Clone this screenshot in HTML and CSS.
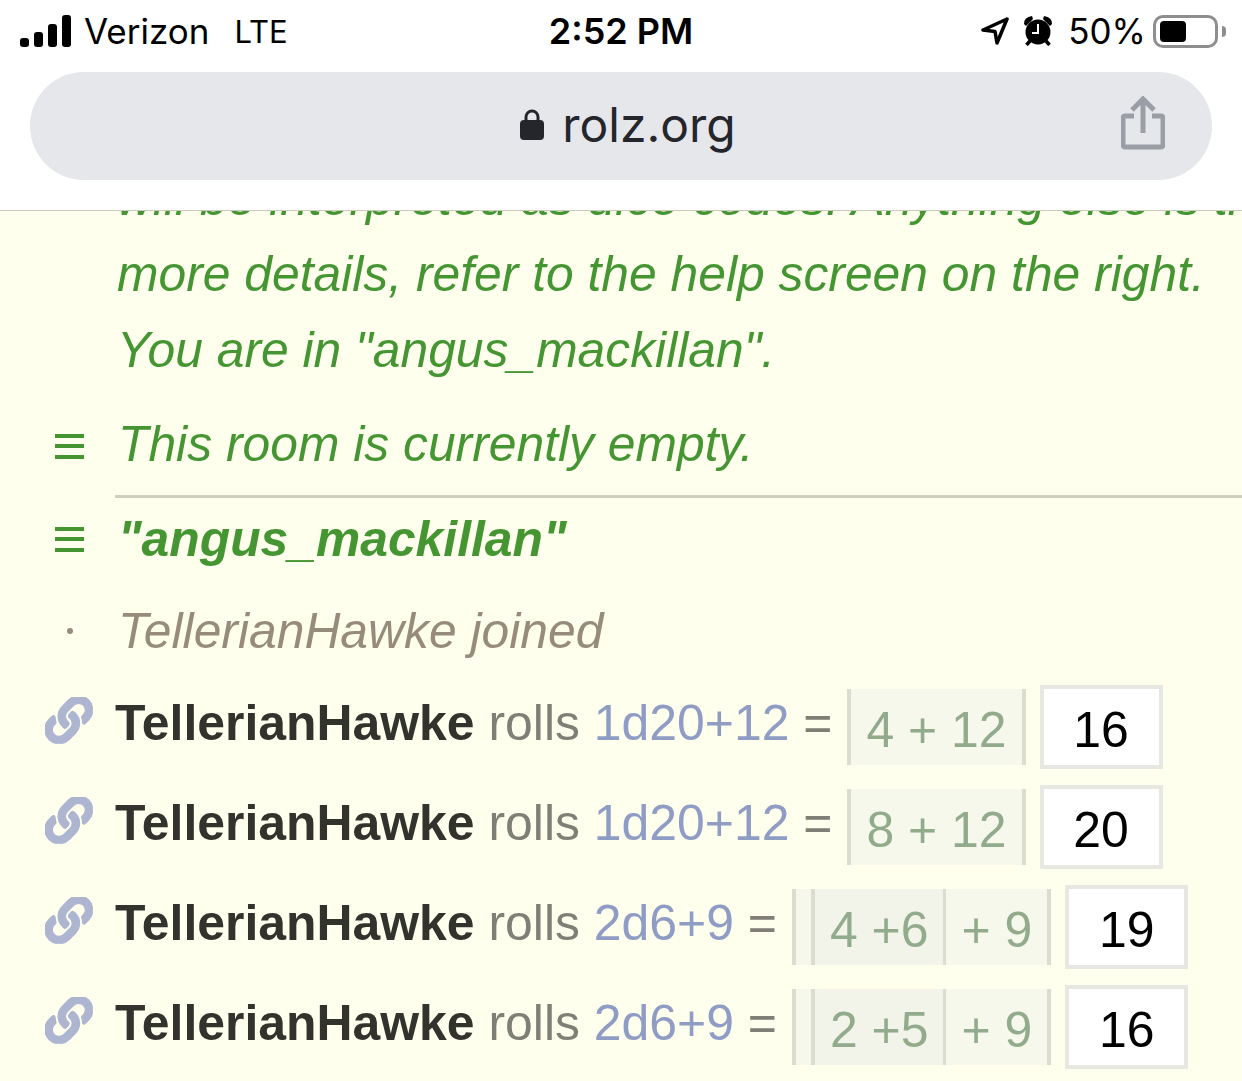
FILE: index.html
```html
<!DOCTYPE html>
<html lang="en">
<head>
    <meta charset="UTF-8">
    <title>rolz.org</title>
    <link rel="stylesheet" href="styles.css">
</head>
<body>
    <div class="page">
        <div class="header">
            <div class="status-bar">
                <div class="status-left">
                    <svg class="signal" width="52" height="32" viewBox="0 0 52 32">
                        <rect x="0" y="23" width="9" height="9" rx="3"/>
                        <rect x="14" y="17" width="9" height="15" rx="3"/>
                        <rect x="28" y="9" width="9" height="23" rx="3"/>
                        <rect x="42" y="0" width="9" height="32" rx="3"/>
                    </svg>
                    <span class="carrier">Verizon</span>
                    <span class="network">LTE</span>
                </div>
                <div class="clock">2:52 PM</div>
                <div class="status-right">
                    <svg class="arrow" width="28" height="28" viewBox="0 0 28 28">
                        <path d="M26 2 L2 13 L14 14.5 L16 26 Z" fill="none" stroke="#000" stroke-width="3.5" stroke-linejoin="round"/>
                    </svg>
                    <svg class="alarm" width="28" height="30" viewBox="0 0 28 30">
                        <circle cx="14" cy="16" r="12.5"/>
                        <path d="M0 8 Q0 1 8 0 L9 3 L2 10 Z M28 8 Q28 1 20 0 L19 3 L26 10 Z"/>
                        <path d="M6 25 L2.5 29 M22 25 L25.5 29" stroke="#000" stroke-width="3.5"/>
                        <path d="M14 8 V17 H8" fill="none" stroke="#fff" stroke-width="2"/>
                    </svg>
                    <span class="percent">50%</span>
                    <div class="battery"><div class="battery-fill"></div></div>
                    <div class="battery-nub"></div>
                </div>
            </div>
            <div class="url-bar">
                <div></div>
                <div class="url">
                    <svg class="lock" width="24" height="31" viewBox="0 0 24 31">
                        <path d="M6 13 V8 a6 6 0 0 1 12 0 V13" fill="none" stroke="#24262b" stroke-width="3"/>
                        <rect x="0" y="11" width="24" height="20" rx="4" fill="#24262b"/>
                    </svg>
                    <span>rolz.org</span>
                </div>
                <svg class="share" width="44" height="54" viewBox="0 0 44 54">
                    <path d="M13 20 H4 a2 2 0 0 0 -2 2 V49 a2 2 0 0 0 2 2 H40 a2 2 0 0 0 2 -2 V22 a2 2 0 0 0 -2 -2 H31" fill="none" stroke="#9b9ea4" stroke-width="5"/>
                    <path d="M22 37 V4 M11 14 L22 3 L33 14" fill="none" stroke="#9b9ea4" stroke-width="5"/>
                </svg>
            </div>
        </div>

        <div class="chat">
            <div class="intro">
                will be interpreted as dice codes. Anything else is treated as chat.<br>
                more details, refer to the help screen on the right.<br>
                You are in "angus_mackillan".
            </div>

            <div class="line room-empty">
                <div class="gutter"><div class="menu-icon"><i></i><i></i><i></i></div></div>
                <div class="notice">This room is currently empty.</div>
            </div>

            <div class="line room-title">
                <div class="gutter"><div class="menu-icon"><i></i><i></i><i></i></div></div>
                <div class="notice title">"angus_mackillan"</div>
            </div>

            <div class="line joined">
                <div class="gutter"><div class="dot"></div></div>
                <div class="join-text">TellerianHawke joined</div>
            </div>

            <div class="line roll">
                <div class="gutter">
                    <svg class="link-icon" viewBox="12 12 488 488"><use href="#chain"/></svg>
                </div>
                <span class="roll-text"><b>TellerianHawke</b> rolls <span class="code">1d20+12</span> =</span>
                <div class="dice">
                    <div class="group">4 + 12</div>
                </div>
                <div class="total">16</div>
            </div>

            <div class="line roll">
                <div class="gutter">
                    <svg class="link-icon" viewBox="12 12 488 488"><use href="#chain"/></svg>
                </div>
                <span class="roll-text"><b>TellerianHawke</b> rolls <span class="code">1d20+12</span> =</span>
                <div class="dice">
                    <div class="group">8 + 12</div>
                </div>
                <div class="total">20</div>
            </div>

            <div class="line roll">
                <div class="gutter">
                    <svg class="link-icon" viewBox="12 12 488 488"><use href="#chain"/></svg>
                </div>
                <span class="roll-text"><b>TellerianHawke</b> rolls <span class="code">2d6+9</span> =</span>
                <div class="dice">
                    <div class="group spacer"></div>
                    <div class="group inner">4 +6</div>
                    <div class="group mod">+ 9</div>
                </div>
                <div class="total">19</div>
            </div>

            <div class="line roll">
                <div class="gutter">
                    <svg class="link-icon" viewBox="12 12 488 488"><use href="#chain"/></svg>
                </div>
                <span class="roll-text"><b>TellerianHawke</b> rolls <span class="code">2d6+9</span> =</span>
                <div class="dice">
                    <div class="group spacer"></div>
                    <div class="group inner">2 +5</div>
                    <div class="group mod">+ 9</div>
                </div>
                <div class="total">16</div>
            </div>
        </div>
    </div>

    <svg width="0" height="0" class="defs">
        <symbol id="chain" viewBox="0 0 512 512">
            <path d="M326.612 185.391c59.747 59.809 58.927 155.698.36 214.59-.11.12-.24.25-.36.37l-67.2 67.2c-59.27 59.27-155.699 59.262-214.96 0-59.27-59.26-59.27-155.7 0-214.96l37.106-37.106c9.84-9.84 26.786-3.3 27.294 10.606.648 17.722 3.826 35.527 9.69 52.721 1.986 5.822.567 12.262-3.783 16.612l-13.087 13.087c-28.026 28.026-28.905 73.66-1.155 101.96 28.024 28.579 74.086 28.749 102.325.51l67.2-67.19c28.191-28.191 28.073-73.757 0-101.83-3.701-3.694-7.429-6.564-10.341-8.569a16.037 16.037 0 0 1-6.947-12.606c-.396-10.567 3.348-21.456 11.698-29.806l21.054-21.055c5.521-5.521 14.182-6.199 20.584-1.731a152.482 152.482 0 0 1 20.522 17.197zM467.547 44.449c-59.261-59.262-155.69-59.27-214.96 0l-67.2 67.2c-.12.12-.25.25-.36.37-58.566 58.892-59.387 154.781.36 214.59a152.454 152.454 0 0 0 20.521 17.196c6.402 4.468 15.064 3.789 20.584-1.731l21.054-21.055c8.35-8.35 12.094-19.239 11.698-29.806a16.037 16.037 0 0 0-6.947-12.606c-2.912-2.005-6.64-4.875-10.341-8.569-28.073-28.073-28.191-73.639 0-101.83l67.2-67.19c28.239-28.239 74.3-28.069 102.325.51 27.75 28.3 26.872 73.934-1.155 101.96l-13.087 13.087c-4.35 4.35-5.769 10.79-3.783 16.612 5.864 17.194 9.042 34.999 9.69 52.721.509 13.906 17.454 20.446 27.294 10.606l37.106-37.106c59.271-59.259 59.271-155.699.001-214.959z"/>
        </symbol>
    </svg>
</body>
</html>
```

FILE: styles.css
```css
* {
    margin: 0;
    padding: 0;
    box-sizing: border-box;
}

body {
    font-family: "Liberation Sans", Arial, sans-serif;
    background: #ffffee;
    color: #33332d;
    overflow: hidden;
}

.page {
    height: 1081px;
    overflow: hidden;
}

.defs {
    display: block;
    height: 0;
}

/* browser chrome */
.header {
    height: 211px;
    background: #ffffff;
    border-bottom: 1px solid #c9c9bc;
    padding: 0 30px;
}

.status-bar {
    height: 62px;
    margin-bottom: 10px;
    display: grid;
    grid-template-columns: 1fr auto 1fr;
    align-items: center;
    font-family: Inter, "Liberation Sans", sans-serif;
    font-size: 35px;
    color: #000;
}

.status-left,
.status-right {
    display: flex;
    align-items: center;
}

.status-left {
    margin-left: -10px;
}

.status-right {
    justify-content: flex-end;
    margin-right: -14px;
}

.signal {
    margin-right: 12px;
}

.carrier {
    margin-right: 25px;
}

.network {
    font-size: 31px;
}

.clock {
    font-size: 36px;
    font-weight: 600;
}

.alarm {
    margin-left: 15px;
}

.percent {
    margin-left: 16px;
    margin-right: 7px;
}

.battery {
    width: 65px;
    height: 33px;
    border: 3px solid #8e8e8e;
    border-radius: 10px;
    padding: 3px 4px;
}

.battery-fill {
    width: 26px;
    height: 21px;
    background: #000;
    border-radius: 4px;
}

.battery-nub {
    width: 4px;
    height: 11px;
    margin-left: 4px;
    background: #8e8e8e;
    border-radius: 0 4px 4px 0;
}

.url-bar {
    height: 108px;
    background: #e6e7eb;
    border-radius: 54px;
    display: grid;
    grid-template-columns: 1fr auto 1fr;
    align-items: center;
    padding: 0 47px 0 61px;
}

.url {
    display: flex;
    align-items: center;
    gap: 18px;
    padding-bottom: 4px;
    font-family: Inter, "Liberation Sans", sans-serif;
    font-size: 48px;
    color: #24262b;
}

.share {
    justify-self: end;
    margin-top: -6px;
}

/* chat log */
.chat {
    height: 870px;
    overflow: hidden;
    font-size: 49.9px;
}

.intro {
    margin-top: -51px;
    padding-left: 117px;
    font-size: 49.8px;
    line-height: 76px;
    white-space: nowrap;
    font-style: italic;
    color: #459632;
}

.line {
    display: flex;
    align-items: center;
    white-space: nowrap;
}

.gutter {
    width: 115px;
    flex: none;
    display: flex;
    justify-content: center;
    padding-left: 24px;
}

.menu-icon {
    width: 29px;
    height: 25px;
    display: flex;
    flex-direction: column;
    justify-content: space-between;
}

.menu-icon i {
    display: block;
    height: 4px;
    background: #459632;
}

.notice {
    margin-left: 3px;
    font-size: 49.8px;
    font-style: italic;
    color: #459632;
}

.title {
    font-weight: bold;
}

.room-empty {
    height: 98px;
    margin-top: 9px;
}

.room-empty .notice {
    padding-bottom: 4px;
}

.room-title {
    height: 82px;
    margin-top: 3px;
    position: relative;
}

.room-title::before {
    content: "";
    position: absolute;
    left: 115px;
    right: 0;
    top: -3px;
    height: 3px;
    background: #cfcfc0;
}

.joined {
    height: 92px;
    margin-top: 5px;
}

.dot {
    width: 6px;
    height: 6px;
    border-radius: 50%;
    background: #978c7c;
}

.join-text {
    margin-left: 3px;
    font-size: 49.8px;
    font-style: italic;
    color: #978c7c;
}

.roll {
    height: 100px;
}

.roll-text {
    color: #7f7f75;
    padding-bottom: 8px;
}

.roll-text b {
    color: #33332d;
}

.code {
    color: #8f9cc4;
}

.link-icon {
    width: 50px;
    height: 48px;
    fill: #adb5d1;
    stroke: #adb5d1;
    stroke-width: 12;
    margin-top: -12px;
}

.dice {
    display: flex;
    height: 76px;
    margin-left: 15px;
    color: #93ab8d;
    background: #f7f8ec;
    border-left: 4px solid #dcdccf;
    border-right: 4px solid #dcdccf;
}

.group {
    padding: 6px 15px 0;
    line-height: 70px;
}

.spacer {
    width: 15px;
    padding: 0;
}

.inner {
    background: #f3f4e9;
    border-left: 4px solid #dcdccf;
    border-right: 3px solid #dcdccf;
}

.total {
    width: 123px;
    height: 84px;
    margin-left: 14px;
    padding-top: 3px;
    line-height: 76px;
    text-align: center;
    color: #000;
    background: #ffffff;
    border: 4px solid #e8e8e2;
}
```
